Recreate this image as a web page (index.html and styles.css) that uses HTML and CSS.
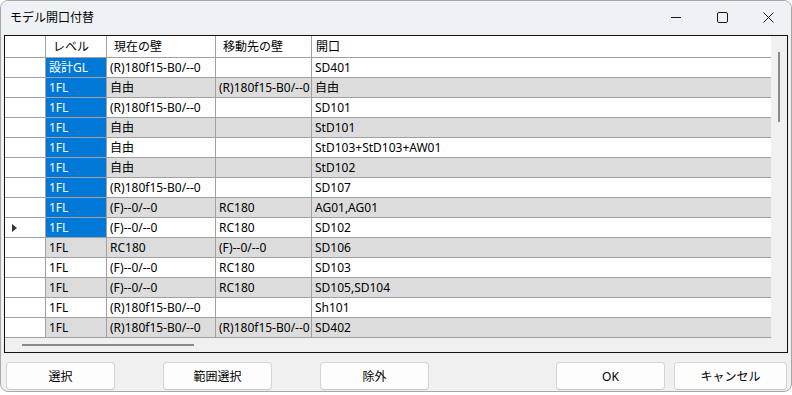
FILE: index.html
```html
<!DOCTYPE html>
<html lang="ja">
<head>
  <meta charset="UTF-8">
  <title>モデル開口付替</title>
  <link rel="stylesheet" href="styles.css">
</head>
<body>
  <div class="window">
    <div class="titlebar">
      <span class="title">モデル開口付替</span>
      <div class="controls">
        <span class="ctl"><svg width="10" height="10" viewBox="0 0 10 10"><path d="M0 5.5h10" stroke="#1a1a1a" stroke-width="1"/></svg></span>
        <span class="ctl"><svg width="11" height="11" viewBox="0 0 11 11"><rect x="0.5" y="0.5" width="10" height="10" rx="1.5" fill="none" stroke="#1a1a1a" stroke-width="1"/></svg></span>
        <span class="ctl"><svg width="11" height="11" viewBox="0 0 11 11"><path d="M0.5 0.5l10 10M10.5 0.5l-10 10" stroke="#1a1a1a" stroke-width="1"/></svg></span>
      </div>
    </div>

    <div class="grid-frame">
      <div class="grid-left">
        <div class="rows">
          <div class="row head">
            <div class="c rh"></div>
            <div class="c lv hd">レベル</div>
            <div class="c cur hd">現在の壁</div>
            <div class="c dst hd">移動先の壁</div>
            <div class="c op hd last">開口</div>
          </div>
          <div class="row">
            <div class="c rh"></div>
            <div class="c lv sel">設計GL</div>
            <div class="c cur">(R)180f15-B0/--0</div>
            <div class="c dst"></div>
            <div class="c op">SD401</div>
          </div>
          <div class="row alt">
            <div class="c rh"></div>
            <div class="c lv sel">1FL</div>
            <div class="c cur">自由</div>
            <div class="c dst">(R)180f15-B0/--0</div>
            <div class="c op">自由</div>
          </div>
          <div class="row">
            <div class="c rh"></div>
            <div class="c lv sel">1FL</div>
            <div class="c cur">(R)180f15-B0/--0</div>
            <div class="c dst"></div>
            <div class="c op">SD101</div>
          </div>
          <div class="row alt">
            <div class="c rh"></div>
            <div class="c lv sel">1FL</div>
            <div class="c cur">自由</div>
            <div class="c dst"></div>
            <div class="c op">StD101</div>
          </div>
          <div class="row">
            <div class="c rh"></div>
            <div class="c lv sel">1FL</div>
            <div class="c cur">自由</div>
            <div class="c dst"></div>
            <div class="c op">StD103+StD103+AW01</div>
          </div>
          <div class="row alt">
            <div class="c rh"></div>
            <div class="c lv sel">1FL</div>
            <div class="c cur">自由</div>
            <div class="c dst"></div>
            <div class="c op">StD102</div>
          </div>
          <div class="row">
            <div class="c rh"></div>
            <div class="c lv sel">1FL</div>
            <div class="c cur">(R)180f15-B0/--0</div>
            <div class="c dst"></div>
            <div class="c op">SD107</div>
          </div>
          <div class="row alt">
            <div class="c rh"></div>
            <div class="c lv sel">1FL</div>
            <div class="c cur">(F)--0/--0</div>
            <div class="c dst">RC180</div>
            <div class="c op">AG01,AG01</div>
          </div>
          <div class="row">
            <div class="c rh"><span class="arrow"></span></div>
            <div class="c lv sel">1FL</div>
            <div class="c cur">(F)--0/--0</div>
            <div class="c dst">RC180</div>
            <div class="c op">SD102</div>
          </div>
          <div class="row alt">
            <div class="c rh"></div>
            <div class="c lv">1FL</div>
            <div class="c cur">RC180</div>
            <div class="c dst">(F)--0/--0</div>
            <div class="c op">SD106</div>
          </div>
          <div class="row">
            <div class="c rh"></div>
            <div class="c lv">1FL</div>
            <div class="c cur">(F)--0/--0</div>
            <div class="c dst">RC180</div>
            <div class="c op">SD103</div>
          </div>
          <div class="row alt">
            <div class="c rh"></div>
            <div class="c lv">1FL</div>
            <div class="c cur">(F)--0/--0</div>
            <div class="c dst">RC180</div>
            <div class="c op">SD105,SD104</div>
          </div>
          <div class="row">
            <div class="c rh"></div>
            <div class="c lv">1FL</div>
            <div class="c cur">(R)180f15-B0/--0</div>
            <div class="c dst"></div>
            <div class="c op">Sh101</div>
          </div>
          <div class="row alt">
            <div class="c rh"></div>
            <div class="c lv">1FL</div>
            <div class="c cur">(R)180f15-B0/--0</div>
            <div class="c dst">(R)180f15-B0/--0</div>
            <div class="c op">SD402</div>
          </div>
        </div>
        <div class="hscroll"><div class="hthumb"></div></div>
      </div>
      <div class="vscroll"><div class="vthumb"></div></div>
    </div>

    <div class="buttons">
      <button class="btn">選択</button>
      <button class="btn">範囲選択</button>
      <button class="btn">除外</button>
      <button class="btn ok">OK</button>
      <button class="btn cancel">キャンセル</button>
    </div>
  </div>
</body>
</html>
```

FILE: styles.css
```css
body {
  margin: 0;
  background: #fff;
  font-family: 'Noto Sans', 'Noto Sans CJK JP', sans-serif;
  font-size: 12px;
  color: #000;
}
.window {
  width: 790px;
  height: 390px;
  border: 1px solid #a8a8a8;
  border-radius: 8px;
  background: #f0f0f0;
  overflow: hidden;
}
.titlebar {
  height: 32px;
  background: #eef2f6;
  display: flex;
  align-items: center;
}
.title {
  padding-left: 9px;
  flex: 1;
}
.controls {
  display: flex;
  height: 100%;
}
.ctl {
  width: 46px;
  display: flex;
  align-items: center;
  justify-content: center;
}
.grid-frame {
  margin: 2px 3px 0 3px;
  border: 1px solid #111;
  height: 316px;
  display: flex;
}
.grid-left {
  flex: 1;
  display: flex;
  flex-direction: column;
  background: #fff;
}
.rows {
  flex: 1;
}
.row {
  display: flex;
  height: 19px;
  border-bottom: 1px solid #a0a0a0;
  line-height: 19px;
}
.row.head {
  height: 21px;
  line-height: 21px;
}
.row.alt .c {
  background: #dcdcdc;
}
.c {
  border-right: 1px solid #a0a0a0;
  padding-left: 3px;
  white-space: nowrap;
  overflow: hidden;
  box-sizing: border-box;
  background: #fff;
}
.row .c.rh {
  width: 41px;
  background: #fff;
  padding-left: 7px;
  display: flex;
  align-items: center;
}
.lv { width: 61px; }
.cur { width: 109px; }
.dst { width: 96px; }
.op {
  flex: 1;
  border-right: none;
}
.hd { padding-left: 7px; }
.hd.last { padding-left: 4px; }
.row .c.sel {
  background: #0078d7;
  color: #fff;
}
.arrow {
  width: 0;
  height: 0;
  border-top: 4px solid transparent;
  border-bottom: 4px solid transparent;
  border-left: 5px solid #333;
}
.hscroll {
  height: 14px;
  background: #f0f0f0;
}
.hthumb {
  width: 172px;
  height: 2px;
  margin: 6px 0 0 17px;
  background: #8a8a8a;
}
.vscroll {
  width: 16px;
  background: #f0f0f0;
}
.vthumb {
  width: 2px;
  height: 70px;
  margin: 16px 0 0 7px;
  background: #8a8a8a;
}
.buttons {
  display: flex;
  margin-top: 9px;
  padding: 0 4px 0 5px;
  gap: 48px;
}
.btn {
  width: 109px;
  height: 28px;
  font-family: inherit;
  font-size: 12px;
  color: #000;
  background: #fdfdfd;
  border: 1px solid #d4d4d4;
  border-bottom-color: #c4c4c4;
  border-radius: 4px;
  padding: 0;
}
.btn.ok {
  margin-left: auto;
}
.btn.cancel {
  width: 113px;
  margin-left: -39px;
}
```
